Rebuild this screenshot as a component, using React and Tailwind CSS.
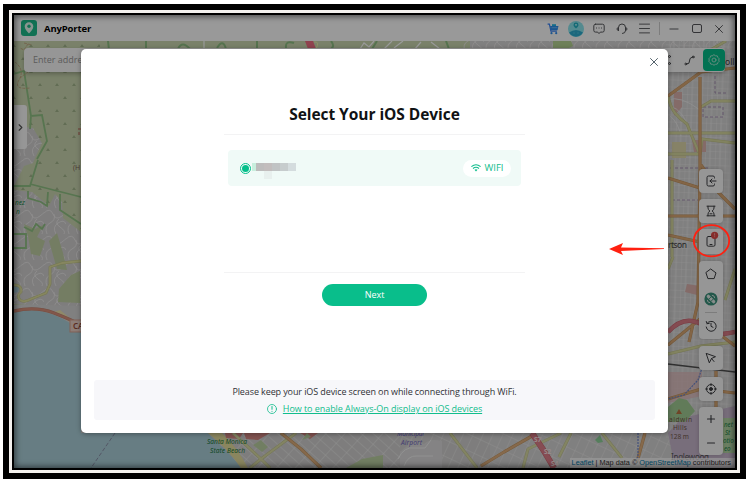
import { useState } from "react";
import { ChevronRight, Menu, Minus, Plus, X } from "lucide-react";

const line = {
  fill: "none",
  stroke: "currentColor",
  strokeWidth: 1,
  strokeLinecap: "round",
  strokeLinejoin: "round",
};

const mosaic = [
  "bg-[#c9eedd]",
  "bg-[#bdbcbc]",
  "bg-[#c2bdbd]",
  "bg-[#c0c3c4]",
  "bg-[#c6cccd]",
  "bg-[#d4dcde]",
];

function Roads({ d, color, width, casing }) {
  return (
    <g fill="none" strokeLinejoin="round">
      <path d={d} stroke={casing} strokeWidth={width + 1} />
      <path d={d} stroke={color} strokeWidth={width} />
    </g>
  );
}

function MapView() {
  return (
    <svg className="absolute inset-0 h-full w-full" viewBox="14 41 721 427">
      <defs>
        <pattern id="blocks" width="10" height="7" patternUnits="userSpaceOnUse" patternTransform="rotate(2)">
          <path d="M0 0H10M0 0V7M5 0V7" stroke="#f0f0f0" strokeWidth=".7" fill="none" />
        </pattern>
        <pattern id="diagonal" width="14" height="8" patternUnits="userSpaceOnUse" patternTransform="rotate(42)">
          <path d="M0 0H14M0 0V8" stroke="#f3f3f3" strokeWidth=".9" fill="none" />
        </pattern>
        <pattern id="slanted" width="9" height="15" patternUnits="userSpaceOnUse" patternTransform="rotate(25)">
          <path d="M0 0H9M0 0V15" stroke="#f3f3f3" strokeWidth=".8" fill="none" />
        </pattern>
        <pattern id="scrub" width="17" height="26" patternUnits="userSpaceOnUse">
          <path d="M4 8l2-3 2 3zM12 21l2-3 2 3z" fill="#a3b58c" />
        </pattern>
        <pattern id="hills" width="22" height="26" patternUnits="userSpaceOnUse">
          <path
            d="M0 5q6-6 9 1t9 2 4-3M3 26q-3-8 3-11t4-9M12 26q-4-7 2-11t8 1M15 11q-5 4 1 8t4 7"
            stroke="#f0eeee"
            strokeWidth=".8"
            fill="none"
          />
        </pattern>
      </defs>

      <rect x="14" y="41" width="721" height="427" fill="#d6d5d5" />

      {/* Topanga side */}
      <path d="M14 41H470V53H90V300L14 305Z" fill="#cbd8b1" />
      <path d="M14 41H100V230H14Z" fill="url(#scrub)" />
      <path d="M14 148q6-16 11-21l8 1 9 15q-5 10-9 20l-9 3-10 20z" fill="#d2d1d1" />
      <path d="M14 148q6-16 11-21l8 1 9 15q-5 10-9 20l-9 3-10 20z" fill="url(#hills)" />
      <path d="M14 190l18 2 17 14 6-12 7 8 1 16 18 14v74l-67-2Z" fill="#d2d1d1" />
      <path d="M14 190l18 2 17 14 6-12 7 8 1 16 18 14v74l-67-2Z" fill="url(#hills)" />
      <path d="M24 224l11 5 8-4-6 12 8 4-5 15-9-2-3-18zM49 241l8-8 6 20 4 17-10-1zM59 289l12-14 9-4v32l-22-1z" fill="#c2d0a5" />
      <g fill="none" stroke="#92c385" strokeWidth="1.8">
        <path d="M14 74l10-3 7 45 11-1 5 26-10 18M31 116l-1 13M38 160l-8 26H14M30 184l51 13M28 191v7l13 4 6 4 1-14M60 194v16l21 14M14 234h12v14H14M24 227l8 4 4-7 6 5 3-5" />
      </g>
      <path d="M15 62q10 8 4 18t11 8M20 78l8-6M28 44l-4 6-4-2M24 43l8 2" stroke="#c29d78" strokeWidth=".8" strokeDasharray="3 1" fill="none" />
      <g fill="none" stroke="#8fc084" strokeWidth="2">
        <path d="M108 41l1 9M146 41v9M178 49q4-9 12 0M217 48q6-10 9 1M257 41v8M286 48q-1-8 8-5M331 41q5 6-2 9M372 49l5-8M446 41l3 8" />
      </g>
      <path d="M360 49l4-6 5 4 5-6M384 49l8-8M394 48l9-7M415 49l6-7M431 42l9 7M204 41v8" stroke="#fff" strokeWidth="1.2" fill="none" />
      <path d="M305 41h8l3 8h-8z" fill="#ee6f84" />
      <path d="M314 42q6-1 2 7" stroke="#f1f2a8" fill="none" />
      <rect x="462" y="41" width="206" height="9" fill="url(#hills)" />
      <path d="M553 41h18l2 5-8 4h-12z" fill="#b7d694" />

      {/* ocean and coast */}
      <path d="M14 312q22-4 40 3t27 18v100h128l13 13q14 14 20 22H14Z" fill="#acd0db" />
      <path d="M14 283l6 3-2 6-4 1z" fill="#acd0db" />
      <path d="M54 312q17 9 27 20v-5L60 310z" fill="#efe5b0" />
      <Roads d="M14 285q8 0 7 7-5 4-1 8 4 3 11-1l15-6 4-9v-17l12-4 19-2" color="#dfe09f" casing="#c3c688" width={1.8} />
      <Roads d="M14 311q22-5 40 2t27 12" color="#d9907c" casing="#bf8371" width={2.4} />
      <rect x="70" y="320" width="22" height="12" fill="#ecd0c6" stroke="#d5a190" />
      <text x="73" y="329" className="font-['Noto_Sans'] text-[8px] font-semibold" fill="#974c3a">CA 1</text>
      <path d="M115 433L91 468" stroke="#7d7794" strokeDasharray="4 2" strokeWidth=".7" />
      <text x="15" y="205" className="font-['Noto_Sans'] text-[6.5px] italic" fill="#20884a">nez</text>
      <text x="16" y="213.500" className="font-['Noto_Sans'] text-[6.5px] italic" fill="#20884a">n</text>
      <text x="73" y="170" className="font-['Noto_Sans'] text-[7px]" fill="#83675a">(H</text>
      <path d="M78 129h4M79 132v3" stroke="#bd5f55" />

      {/* strip below the dialog */}
      <path d="M208 433H490V468H241q-9-13-21-23z" fill="#d2d1d0" />
      <path d="M208 433H400V468H241q-9-13-21-23z" fill="url(#diagonal)" />
      <rect x="400" y="433" width="300" height="35" fill="url(#slanted)" />
      <path d="M208 433h14q15 14 26 35h-7q-13-19-33-35z" fill="#e7df9e" />
      <path d="M225 433h18l-4 6-13-1zM244 433h26l-12 7-12-1zM300 433h18l-8 6z" fill="#d98d87" />
      <path d="M346 468l16-9 21-4v13zM311 437l-9 3 5-7zM253 445l8-5 7 7-6 5z" fill="#bdd2a3" />
      <path d="M400 452q14-14 24-8 6-6 18-3v27h-42z" fill="#dcdbdc" />
      <path d="M398 459q6-13 17-11h10l6-8M404 466q4-11 13-10h16" stroke="#f3f3f3" strokeWidth="1" fill="none" />
      <Roads d="M233 433l28 26-11 9M261 459l35-26M261 459l9 9M450 433l27 35M559 457l12-24M602 433l20 25M523 468l5-19 33-16" color="#dbdda5" casing="#c3c591" width={2} />
      <Roads d="M281 433l20 16 20 19M504 452l28-16M504 452l-23 14M645 433l-8 29" color="#dfaf7e" casing="#c4965f" width={2.2} />
      <Roads d="M532 433l12 18 10 17" color="#df7f8a" casing="#c9626e" width={5} />
      <path d="M595 440l5-5 3 7-5 1z" fill="#8ed39a" />
      <path d="M638 433v24l-5 8" stroke="#6f87cd" strokeWidth="1.2" strokeDasharray="2 1" fill="none" />
      <g className="font-['Noto_Sans'] text-[6.5px] font-bold" fill="#fbe6e6">
        <text x="534" y="442">S7</text>
        <text x="544" y="454">S2</text>
        <text x="551" y="466">S4</text>
      </g>
      <g className="font-['Noto_Sans'] text-[6.6px] italic" fill="#1d7a3c">
        <text x="207" y="444" textLength="40">Santa Monica</text>
        <text x="210" y="452.500" textLength="35">State Beach</text>
      </g>
      <g className="font-['Noto_Sans'] text-[6.6px] italic" fill="#7168c1">
        <text x="397" y="436" textLength="27">Municipal</text>
        <text x="401" y="444.500" textLength="21">Airport</text>
      </g>

      {/* city grid on the east side */}
      <rect x="666" y="41" width="69" height="400" fill="url(#blocks)" />
      <path d="M674 92h8v15l-8 9zM692 140h14v12h-12zM687 284l13 2-3 9-12-3z" fill="#dcb2ae" />
      <path d="M672 142h14v16h-14z" fill="#dfd9ac" />
      <path d="M668 372h34v24l-34 7z" fill="#e2bcbd" fillOpacity=".75" />
      <path d="M668 433l14-15 53-12v62h-60z" fill="#c8b7ce" />
      <path d="M668 407l11-9 8 2 8 11-10 11h-17z" fill="#a2ce95" />
      <path d="M720 418h15v35h-15z" fill="#b4d5a5" />
      <path d="M668 49v-8h67v8z" fill="url(#hills)" />
      <g fill="none" stroke="#9a7eaa" strokeWidth=".8" strokeDasharray="3 2">
        <path d="M715 76v17h12M703 107h20v10h-20zM670 168h40M672 200h35" />
      </g>
      <path d="M668 100q12-5 32 10M670 106q14 4 20 26M670 116q8 6 11 20" stroke="#f0f0f0" strokeWidth=".8" fill="none" />
      <Roads
        d="M668 95q2 12 7 18t12 11l4 10 8 19M668 133h67M668 154h32l2-15 33 4M701 107l10-6h24M672 160v97M726 41l-14 8M668 354l33-8 34-4M699 210l12 2M725 300l10-31M668 269l5-12"
        color="#d9dba0"
        casing="#c0c388"
        width={2}
      />
      <Roads
        d="M668 96l33-24 34-4M700 77v95l-2 130-9 40M668 178l32 10M668 216h67M668 235l32 7M701 165l17 24M718 192l17 17M668 345l32-26 35 27M668 399l33-10 34 4M716 371v37"
        color="#dba975"
        casing="#c0925f"
        width={2.2}
      />
      <Roads d="M668 332q12-13 24-11t16 9 27 2" color="#dc7d88" casing="#c9626e" width={3.6} />
      <path d="M668 364l67 8" stroke="#515151" strokeWidth="1.3" />
      <path d="M708 350l-10 30-14 15-16 4" stroke="#6f87cd" strokeWidth="1.2" strokeDasharray="2 1" fill="none" />
      <path d="M676 414l3-5 3 5z" fill="#b97442" />
      <g className="font-['Noto_Sans'] text-[6.6px]" fill="#72594a">
        <text x="669" y="421.500" textLength="23">aldwin</text>
        <text x="673" y="430" textLength="14">Hills</text>
        <text x="670" y="438.500" textLength="19">128 m</text>
      </g>
      <text x="671" y="460" className="font-['Noto_Sans'] text-[8px]" fill="#555555" textLength="38">Inglewood</text>
      <g className="font-['Noto_Sans'] text-[6.2px] italic" fill="#18834a">
        <text x="724" y="427">net</text>
        <text x="725" y="435">St</text>
        <text x="723" y="443">otio</text>
        <text x="724" y="451">eo</text>
      </g>
      <text x="668" y="248" className="font-['Noto_Sans'] text-[8.5px]" fill="#444444" textLength="19">rtson</text>
      <text x="725" y="65" className="font-['Noto_Sans'] text-[8.5px]" fill="#444444">oll</text>
    </svg>
  );
}

function Logo() {
  return (
    <svg className="h-4 w-4" viewBox="0 0 16 16">
      <rect width="16" height="16" rx="3" fill="#1fbd8c" />
      <path d="M8 2.200a4.200 4.200 0 0 1 4.300 4.200C12.300 9.300 9.800 11.300 8 13.500 6.200 11.300 3.700 9.300 3.700 6.400A4.200 4.200 0 0 1 8 2.200z" fill="#e4f8f0" />
      <circle cx="8" cy="6.300" r="1.700" fill="#1fbd8c" />
    </svg>
  );
}

function CartIcon() {
  return (
    <svg className="h-3 w-3" viewBox="0 0 12 12">
      <path d="M.6 1.200h1.800l1.500 7h6" fill="none" stroke="#3b82f6" strokeWidth="1.200" />
      <path d="M3 3h8.500l-1 4.300H4z" fill="#2f8fef" />
      <path d="M5 1.200h4V3H5z" fill="#22b6e8" />
      <path d="M4.500 4.700h6" stroke="#8dd8ff" strokeWidth=".6" />
      <circle cx="4.500" cy="10.200" r="1.100" fill="#2f8fef" />
      <circle cx="9.200" cy="10.200" r="1.100" fill="#2f8fef" />
    </svg>
  );
}

function Avatar() {
  return (
    <svg className="h-4 w-4" viewBox="0 0 16 16">
      <circle cx="8" cy="8" r="8" fill="#8ce6ef" />
      <path d="M1 11.500Q8 6.500 15 11.500A8 8 0 0 1 1 11.500z" fill="#30aed0" />
      <path d="M8 1.500a2.500 2.500 0 0 1 2.500 2.400C10.500 5.500 9 6.300 8 7.500 7 6.300 5.500 5.500 5.500 3.900A2.500 2.500 0 0 1 8 1.500z" fill="#24b3c5" />
      <circle cx="8" cy="3.800" r=".9" fill="#c9fbff" />
      <path d="M5.500 12h1M9.500 12h1" stroke="#8ce6ef" strokeWidth=".7" />
    </svg>
  );
}

function TitleBar() {
  return (
    <div className="flex h-[26px] items-center bg-white pl-[7px] text-[#55565a]">
      <Logo />
      <span className="mt-[3px] ml-[7px] flex-1 font-['Open_Sans','Noto_Sans',sans-serif] text-[9.5px] font-bold tracking-[-0.15px] text-black">
        AnyPorter
      </span>
      <div className="mr-[9px] flex items-center pt-px">
        <CartIcon />
        <span className="ml-[9px]"><Avatar /></span>
        <svg {...line} className="ml-[9px] h-3 w-3" viewBox="0 0 12 12">
          <path d="M2.500 1.200h7a1.700 1.700 0 0 1 1.700 1.700v4.500a1.700 1.700 0 0 1-1.700 1.700H7.300L6 10.600 4.700 9.100H2.500A1.700 1.700 0 0 1 .8 7.400V2.900a1.700 1.700 0 0 1 1.700-1.700z" />
          <path d="M3.500 5h.1M6 5h.1M8.500 5h.1" />
        </svg>
        <svg {...line} className="ml-[11px] h-3 w-3" viewBox="0 0 12 12">
          <path d="M2.500 7.500v-3a3.500 3.500 0 0 1 7 0v3q0 2.800-3 3M2.500 4.500Q1 4.500 1 6t1.500 1.500M9.500 4.500Q11 4.500 11 6T9.500 7.500" />
        </svg>
        <Menu className="ml-[9px] h-[15px] w-[15px]" strokeWidth={1.5} />
        <div className="ml-[7px] h-[13px] w-px bg-[#cfcfcf]" />
        <Minus className="ml-[7px] h-[14px] w-[14px]" strokeWidth={1.6} />
        <div className="ml-[11px] h-[9px] w-[10px] rounded-[2px] border border-[#55565a]" />
        <X className="ml-[10px] h-[14px] w-[14px]" strokeWidth={1.6} />
      </div>
    </div>
  );
}

function SearchBar() {
  return (
    <div className="mr-[10px] ml-[10px] flex h-6 items-center rounded-[4px] bg-[#fafafa] shadow-[0_2px_4px_rgba(0,0,0,0.25)]">
      <span className="flex-1 pl-[9px] font-['Open_Sans','Noto_Sans',sans-serif] text-[9px] text-[#999999]">
        Enter address / GPS coordinates
      </span>
      <svg {...line} className="mr-[12px] h-3 w-3 text-[#46474b]" viewBox="0 0 12 12">
        <circle cx="2.500" cy="9.500" r="1" />
        <circle cx="9.500" cy="2.500" r="1" />
        <circle cx="9.500" cy="9.500" r="1" />
      </svg>
      <svg {...line} className="mr-[8px] h-[11px] w-[11px] text-[#46474b]" viewBox="0 0 11 11">
        <circle cx="1.800" cy="9" r=".9" />
        <circle cx="9.200" cy="2" r=".9" />
        <path d="M2.700 9q3.200 0 2.800-3T8.300 2" />
      </svg>
      <div className="flex h-[22px] w-[22px] items-center justify-center rounded-[4px] bg-[#05bf8b]">
        <svg {...line} className="h-3 w-3 text-[#a5e8d2]" viewBox="0 0 12 12">
          <path d="M6 .8l1.500 1 1.800.1.700 1.700 1.200 1.200L10.700 6l.5 1.300L10 8.500l-.7 1.600-1.800.2L6 11.200l-1.500-.9-1.800-.2L2 8.500.8 7.300 1.300 6 .8 4.800 2 3.600l.7-1.700 1.800-.1z" />
          <circle cx="6" cy="6" r="2" />
        </svg>
      </div>
    </div>
  );
}

function ToolGroup({ children, className = "" }) {
  return (
    <div
      className={`flex w-6 flex-col items-center rounded-[4px] bg-[#fafafa] text-[#3d3e42] shadow-[0_0_4px_rgba(0,0,0,0.2)] ${className}`}
    >
      {children}
    </div>
  );
}

function Tool({ children, className = "h-[24px]" }) {
  return (
    <div className={`flex w-full items-center justify-center ${className}`}>
      <svg {...line} className="h-3 w-3 overflow-visible" viewBox="0 0 12 12">
        {children}
      </svg>
    </div>
  );
}

function Toolbar() {
  return (
    <div className="mt-[96.500px] mr-[12px] flex flex-col items-end">
      <ToolGroup>
        <Tool>
          <path d="M9.500 3V2.500Q9.500 1 8 1H3.500Q2 1 2 2.500v7Q2 11 3.500 11H8q1.500 0 1.500-1.500V9M11 6H5M7 4L5 6l2 2" />
        </Tool>
      </ToolGroup>
      <ToolGroup className="mt-[6px]">
        <Tool>
          <path d="M2 1.200h8M2 10.800h8M3 1.200V3q0 1.500 1.800 3Q3 7.500 3 9v1.800M9 1.200V3q0 1.500-1.800 3Q9 7.500 9 9v1.800M5 8.800h2" />
        </Tool>
      </ToolGroup>
      <ToolGroup className="mt-[6px]">
        <Tool className="h-[25px]">
          <rect x="2" y="1.500" width="8" height="9.700" rx="1.300" />
          <path d="M5 9.500h2" />
          <circle cx="9.600" cy=".3" r="3.600" fill="#e04a48" stroke="none" />
          <path d="M9.600-1.400v1.600M9.600 1.700v.1" stroke="#f3b5b2" strokeWidth=".8" />
        </Tool>
      </ToolGroup>
      <ToolGroup className="mt-[7px]">
        <Tool className="h-[26px]">
          <path d="M6 1.200l5 3.700-1.900 5.700H2.900L1 4.900z" />
        </Tool>
        <Tool className="h-[25px]">
          <circle cx="6" cy="6" r="6.600" fill="#3b927c" stroke="none" />
          <path d="M3.300 3.300l5.400 5.400" stroke="#dfe9e6" strokeWidth="3.200" />
          <path d="M3.800 6.200l2.200-2.200M6 8.300l2.200-2.200" stroke="#3b927c" strokeWidth=".9" />
          <path d="M7.300 2.300q2.200 0 2.400 2.400M2.300 7.300q0 2.200 2.400 2.400" stroke="#dfe9e6" strokeWidth=".9" />
        </Tool>
        <div className="h-px w-3 bg-[#cfcfcf]" />
        <Tool className="h-[26px]">
          <path d="M2 3.500A5 5 0 1 1 1.200 7M1.300 1.500L2 3.700l2.200-.3M6 3.300V6.300l2 1" />
        </Tool>
      </ToolGroup>
      <ToolGroup className="mt-[7px]">
        <Tool>
          <path d="M1.500 1.500l9 3.200-4 1.800-2 4zM6.500 6.500l2.500 3" />
        </Tool>
      </ToolGroup>
      <ToolGroup className="mt-[7px]">
        <Tool>
          <circle cx="6" cy="6" r="4.500" />
          <circle cx="6" cy="6" r="1.500" fill="currentColor" />
          <path d="M6 .6v2M6 9.400v2M.6 6h2M9.400 6h2" />
        </Tool>
      </ToolGroup>
      <ToolGroup className="mt-[6.500px]">
        <div className="flex h-6 items-center">
          <Plus className="h-3 w-3" strokeWidth={2.2} />
        </div>
        <div className="flex h-6 items-center">
          <Minus className="h-3 w-3" strokeWidth={2.2} />
        </div>
      </ToolGroup>
    </div>
  );
}

function DeviceRow({ checked, onSelect }) {
  return (
    <button
      className="mt-[15px] flex h-9 w-[293px] items-center rounded-[4px] bg-[#f0faf7] pr-[10px] pl-[12px]"
      onClick={onSelect}
    >
      <span className="flex h-[11px] w-[11px] items-center justify-center rounded-full border border-[#05bf8b]">
        {checked && <span className="h-[7px] w-[7px] rounded-full bg-[#05bf8b]" />}
      </span>
      <span className="mt-[6px] ml-px flex flex-col">
        <span className="flex">
          {mosaic.map((tone, i) => (
            <span key={i} className={`h-2 ${i === 0 ? "w-1" : "w-2"} ${tone}`} />
          ))}
        </span>
        <span className="ml-[12px] h-2 w-2 bg-[#e8f0ee]" />
      </span>
      <span className="ml-auto flex h-[17px] w-12 items-center justify-center gap-[4px] rounded-full bg-white text-[#10bd8c]">
        <svg className="h-2 w-[10px]" viewBox="0 0 10 8" fill="none" stroke="currentColor" strokeWidth="1.100">
          <path d="M.4 2.700Q5-1.300 9.600 2.700M2 4.500q3-2.500 6 0" />
          <path d="M3.500 5.700L5 7.500l1.500-1.800Q5 4.800 3.500 5.700z" fill="currentColor" stroke="none" />
        </svg>
        <span className="text-[9.5px] leading-none">WIFI</span>
      </span>
    </button>
  );
}

function DeviceDialog() {
  const [checked, setChecked] = useState(true);

  return (
    <div className="absolute top-[34px] left-[67px] flex h-[384px] w-[587px] flex-col items-center rounded-[5px] bg-white font-['Open_Sans','Noto_Sans',sans-serif] shadow-[0_1px_5px_rgba(0,0,0,0.35)]">
      <div className="flex h-7 w-full justify-end pt-[6px] pr-[7px]">
        <X className="h-[14px] w-[14px] text-[#52616a]" strokeWidth={1.7} />
      </div>
      <h1 className="mt-[25px] text-[15.5px] leading-6 font-bold tracking-[-0.05px] text-[#101214]">
        Select Your iOS Device
      </h1>
      <div className="mt-2 h-px w-[301px] bg-[#f3f3f4]" />
      <DeviceRow checked={checked} onSelect={() => setChecked(!checked)} />
      <div className="mt-[86px] h-px w-[301px] bg-[#f3f3f4]" />
      <button className="mt-[11px] h-[22px] w-[105px] rounded-full bg-[#09be8b] text-[9px] text-white">
        Next
      </button>
      <div className="mt-auto mb-[13px] flex h-10 w-[561px] flex-col items-center rounded-[3px] bg-[#f7f7fa]">
        <p className="mt-[5px] text-[9px] leading-[14px] tracking-[-0.105px] whitespace-nowrap text-[#303236]">
          Please keep your iOS device screen on while connecting through WiFi.
        </p>
        <p className="mt-[3px] flex items-center gap-[6px] text-[9px] leading-[14px] tracking-[-0.06px] whitespace-nowrap text-[#10bd8c]">
          <svg {...line} className="h-[10px] w-[10px]" viewBox="0 0 10 10">
            <circle cx="5" cy="5" r="4.500" strokeWidth=".8" />
            <path d="M5 2.500v2.800M5 7.300v.1" />
          </svg>
          <a className="underline" href="#always-on">How to enable Always-On display on iOS devices</a>
        </p>
      </div>
    </div>
  );
}

function Annotations() {
  return (
    <svg className="absolute inset-0 h-full w-full" viewBox="14 15 721 453">
      <ellipse cx="711.500" cy="240.800" rx="17.700" ry="15.600" fill="none" stroke="#ff2010" strokeWidth="1.800" />
      <path d="M609 249l14-6-2 4.500 43 .8v.7l-43 2 2 4z" fill="#ff2010" />
    </svg>
  );
}

export default function App() {
  return (
    <div className="h-[483px] w-[749px] overflow-hidden bg-white pt-[4px] pl-[3px]">
      <div className="h-[475px] w-[743px] border-[6px] border-black">
        <div className="h-full border-[3px] border-[#f4f1ee]">
          <div className="h-full border-2 border-black">
            <div className="relative flex h-full flex-col overflow-hidden">
              <TitleBar />
              <div className="relative flex-1">
                <MapView />
                <div className="relative pt-[7px]">
                  <SearchBar />
                  <Toolbar />
                </div>
                <div className="absolute top-[64px] left-0 flex h-11 w-[13px] items-center justify-center rounded-r-[3px] bg-[#fafafa]">
                  <ChevronRight className="h-[11px] w-[11px] text-[#555555]" strokeWidth={2.5} />
                </div>
                <div className="absolute right-0 bottom-0 bg-white/70 pr-[4px] pl-[2px] font-['Liberation_Sans',sans-serif] text-[7.300px] leading-[10px] whitespace-nowrap text-[#333333]">
                  <span className="text-[#0078a8]">Leaflet</span> | Map data ©{" "}
                  <span className="text-[#0078a8]">OpenStreetMap</span> contributors
                </div>
              </div>
              <div className="absolute inset-0 bg-black/40 shadow-[inset_0_0_6px_1px_rgba(0,0,0,0.6)]" />
              <DeviceDialog />
              <Annotations />
            </div>
          </div>
        </div>
      </div>
    </div>
  );
}
